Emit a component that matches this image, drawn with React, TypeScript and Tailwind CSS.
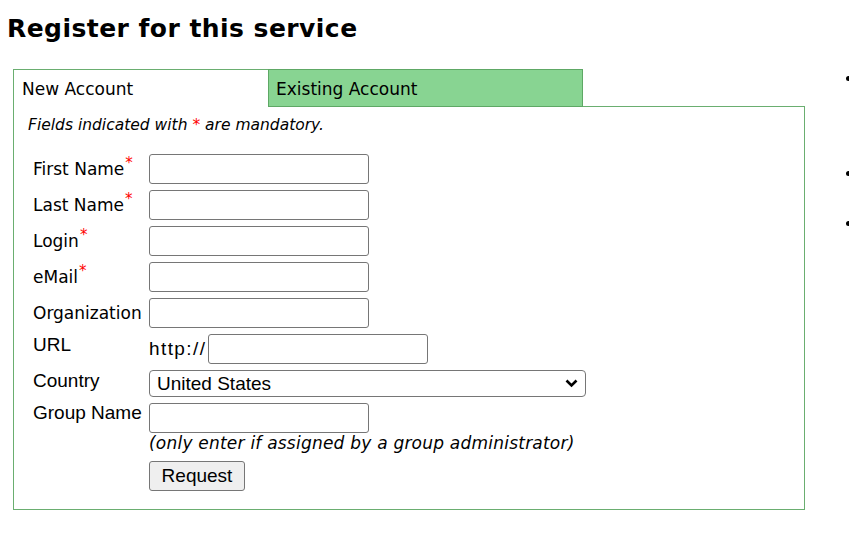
const verdana = "font-['DejaVu_Sans','Verdana',sans-serif]";
const arial = "font-['Liberation_Sans','Arial',sans-serif]";

const Star = () => <span className="text-[#ff0000] text-[15px] relative -top-[7px] ml-[1px]">*</span>;

const TextInput = ({ w = "w-[220px]" }: { w?: string }) => (
  <input type="text" className={`${w} h-[30px] border border-[#767676] rounded-[3px] bg-white px-1`} />
);

const Field = (props: { label: string; req?: boolean }) => (
  <>
    <div className={`${verdana} text-[17px] leading-[20px] text-black pt-[5px] whitespace-nowrap`}>
      {props.label}
      {props.req && <Star />}
    </div>
    <div>
      <TextInput />
    </div>
  </>
);

const App = () => {
  return (
    <div className="flex w-[849px] h-[541px] overflow-hidden bg-white text-black">
      <div className="w-[846px] shrink-0 pl-[13px]">
        <h1 className={`${verdana} font-bold text-[25px] leading-[28px] tracking-[0.45px] mt-[15px] -ml-[6px]`}>
          Register for this service
        </h1>

        <div className="mt-[26px] w-[792px]">
          <div className={`flex items-end h-[38px] ${verdana} text-[17px] leading-[20px]`}>
            <div className="w-[255px] h-[38px] border-l border-t border-[#6aae70] bg-white pl-[8px] pt-[9px]">
              New Account
            </div>
            <div className="w-[315px] h-[38px] border border-[#5ea865] bg-[#88d492] pl-[7px] pt-[9px]">
              Existing Account
            </div>
            <div className="flex-1 h-px bg-[#6aae70]" />
          </div>

          <div className="h-[403px] border-x border-b border-[#6aae70] pl-[14px] pt-[10px]">
            <p className={`${verdana} italic text-[15.5px] leading-[17px]`}>
              Fields indicated with <span className="text-[#ff0000]">*</span> are mandatory.
            </p>

            <div className="grid grid-cols-[116px_auto] gap-y-[6px] mt-[20px] ml-[5px]">
              <Field label="First Name" req />
              <Field label="Last Name" req />
              <Field label="Login" req />
              <Field label="eMail" req />
              <Field label="Organization" />

              <div className={`${arial} text-[19px] leading-[22px]`}>URL</div>
              <div className={`flex items-center ${arial} text-[19px]`}>
                <span className="tracking-[1.4px] mr-[2px]">http://</span>
                <TextInput />
              </div>

              <div className={`${arial} text-[19px] leading-[22px]`}>Country</div>
              <div className="relative w-[437px] h-[27px]">
                <select
                  defaultValue="United States"
                  className={`${arial} appearance-none w-full h-full border border-[#767676] rounded-[4px] bg-white pl-[7px] text-[19px] leading-[22px]`}
                >
                  <option>United States</option>
                  <option>Canada</option>
                  <option>United Kingdom</option>
                </select>
                <svg
                  className="absolute right-[8px] top-[9px] pointer-events-none"
                  width="13"
                  height="9"
                  viewBox="0 0 13 9"
                >
                  <path d="M1.5 1.5 L6.5 6.5 L11.5 1.5" fill="none" stroke="#000" strokeWidth="2.6" />
                </svg>
              </div>

              <div className={`${arial} text-[19px] leading-[22px] -mt-[1px]`}>Group Name</div>
              <div>
                <TextInput />
                <div className={`${verdana} italic text-[17px] leading-[20px] tracking-[0.22px] whitespace-nowrap`}>
                  (only enter if assigned by a group administrator)
                </div>
                <button
                  className={`${arial} mt-[8px] w-[96px] h-[30px] border border-[#767676] rounded-[3px] bg-[#efefef] text-[19px] leading-[22px]`}
                >
                  Request
                </button>
              </div>
            </div>
          </div>
        </div>
      </div>

      <div className="flex flex-col">
        <div className="mt-[76px] w-[5px] h-[5px] rounded-full bg-black" />
        <div className="mt-[90px] w-[5px] h-[5px] rounded-full bg-black" />
        <div className="mt-[45px] w-[5px] h-[5px] rounded-full bg-black" />
      </div>
    </div>
  );
};

export default App;
